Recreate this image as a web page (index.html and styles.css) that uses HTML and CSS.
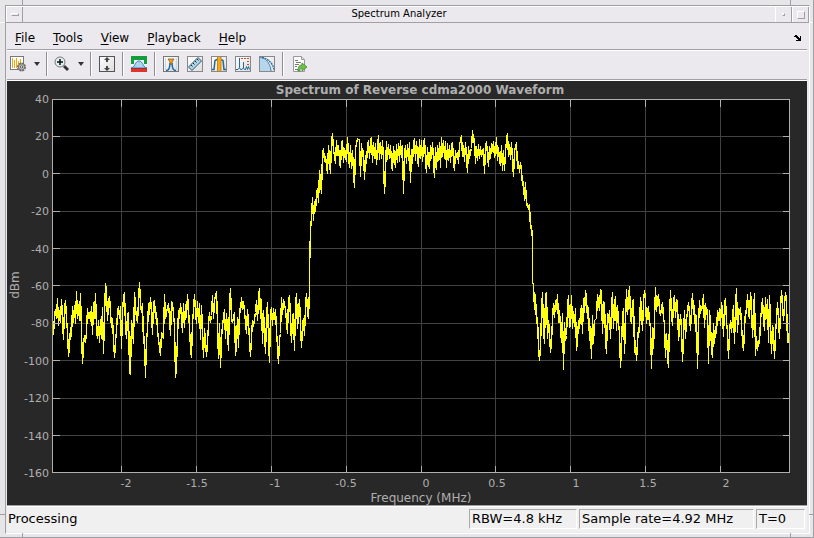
FILE: index.html
```html
<!DOCTYPE html>
<html lang="en">
<head>
<meta charset="UTF-8">
<meta name="viewport" content="width=device-width, initial-scale=1.0">
<title>Spectrum Analyzer</title>
<link rel="stylesheet" href="styles.css">
</head>
<body>
<div class="frame">
<div class="window">
    <header class="titlebar">
        <button class="win-btn win-menu" aria-label="Window menu"><span></span></button>
        <h1>Spectrum Analyzer</h1>
        <button class="win-btn win-min" aria-label="Minimize"><span></span></button>
        <button class="win-btn win-max" aria-label="Maximize"><span></span></button>
    </header>

    <main class="content">
        <nav class="menubar">
            <button><u>F</u>ile</button>
            <button><u>T</u>ools</button>
            <button><u>V</u>iew</button>
            <button><u>P</u>layback</button>
            <button><u>H</u>elp</button>
            <button class="dock" aria-label="Dock">
                <svg width="8" height="6" viewBox="0 0 8 6" shape-rendering="crispEdges"><path d="M1 0h2v1h1v1h1v1h1V1h1v5H2V5h2V4H3V3H2V2H0V1h1z"/></svg>
            </button>
        </nav>

        <div class="toolbar">
            <button aria-label="Configuration">
                <svg viewBox="0 0 16 16">
                    <rect x="-.5" y=".5" width="13" height="13" fill="#fff" stroke="#777"/>
                    <path d="M1.5 2v10M3.5 4v8M5.5 2v10M7.5 5v6M9.5 3v5" stroke="#f5a50a"/>
                    <circle cx="10.500" cy="11" r="3.500" fill="#ddd" stroke="#666" stroke-width="2" stroke-dasharray="2 .7"/>
                    <circle cx="10.500" cy="11" r="3" fill="#ccc" stroke="#777"/>
                    <circle cx="10.500" cy="11" r="1.200" fill="#fff" stroke="#555"/>
                </svg>
            </button>
            <button class="caret" aria-label="Configuration options"></button>
            <span class="sep"></span>
            <button aria-label="Zoom">
                <svg viewBox="0 0 16 16">
                    <path d="M9 10l4 4" stroke="#333" stroke-width="3"/>
                    <circle cx="5" cy="6" r="5" fill="#dff0f4" stroke="#777"/>
                    <path d="M2 6h6M5 3v6" stroke="#111" stroke-width="1.500"/>
                </svg>
            </button>
            <button class="caret" aria-label="Zoom options"></button>
            <span class="sep"></span>
            <button aria-label="Scale axes">
                <svg viewBox="0 0 16 16">
                    <rect x=".5" y=".5" width="15" height="15" fill="url(#paper)" stroke="#555"/>
                    <path d="M8 1l3 3H9v2H7V4H5zM8 15l3-3H9v-2H7v2H5z" fill="#444"/>
                </svg>
            </button>
            <span class="sep"></span>
            <button aria-label="Spectral mask">
                <svg viewBox="0 0 16 16">
                    <rect width="16" height="16" fill="#e8f4fa"/>
                    <path d="M0 0h16v8h-3V4H3v4H0z" fill="#159c3c"/>
                    <path d="M0 12c4 0 4-7 8-7s4 7 8 7z" fill="#b9dcf2" stroke="#3b79aa"/>
                    <path d="M8 5v7M5 8v4M11 8v4" stroke="#7eb1d5" stroke-width=".5"/>
                    <path d="M0 12h16v4H0z" fill="#e53228"/>
                    <path d="M0 12.500h16" stroke="#8d3540"/>
                </svg>
            </button>
            <span class="sep"></span>
            <button aria-label="Peak measurements">
                <svg viewBox="0 0 16 16">
                    <rect x=".5" y=".5" width="15" height="15" fill="url(#paper)" stroke="#777"/>
                    <path d="M8 6v9M2.500 2v12M13.500 2v12" stroke="#bdd9eb"/>
                    <path d="M3 14.500c3 0 3.500-2 4-7h2c.500 5 1 7 4 7" fill="none" stroke="#24699a" stroke-width="1.500"/>
                    <path d="M5 3h6L9 6v2H7V6z" fill="#f5a51a" stroke="#765126" stroke-width=".7"/>
                </svg>
            </button>
            <button aria-label="Cursor measurements">
                <svg viewBox="0 0 16 16">
                    <rect x=".5" y=".5" width="15" height="15" fill="url(#paper)" stroke="#888"/>
                    <path d="M1.500 11L11 1.500 14.500 5 5 14.500z" fill="#acd5ea" stroke="#31566e"/>
                    <path d="M4 9l1.500 1.500M6 7l1.500 1.500M8 5l1.500 1.500M10 3l1.500 1.500" stroke="#222"/>
                </svg>
            </button>
            <button aria-label="Channel measurements">
                <svg viewBox="0 0 16 16">
                    <rect x=".5" y=".5" width="15" height="15" fill="url(#paper)" stroke="#888"/>
                    <path d="M1 13.500h2l1-9 2-1h4l2 1 1 9h2" fill="none" stroke="#24699a" stroke-width="1.500"/>
                    <path d="M6 1h4v14H6z" fill="#fba710"/>
                    <path d="M6.500 1v14M10 1v14" stroke="#cd8416"/>
                </svg>
            </button>
            <button aria-label="Distortion measurements">
                <svg viewBox="0 0 16 16">
                    <rect x=".5" y=".5" width="15" height="15" fill="url(#paper)" stroke="#888"/>
                    <path d="M1 13.500h2l1.500-2V2v9.500l1 2H7l1.500-2V6v6l1 1.500h1l1-3 1 3 1-3 1 3" fill="none" stroke="#24699a"/>
                    <path d="M6 2.500h2M9 2.500h2M12 2.500h2M12 5.500h2M12 8.500h2" stroke="#c64c3d"/>
                </svg>
            </button>
            <button aria-label="CCDF measurements">
                <svg viewBox="0 0 16 16">
                    <rect x=".5" y=".5" width="15" height="15" fill="url(#paper)" stroke="#888"/>
                    <path d="M1 2c5 0 9 5 10 13H1z" fill="#b4d7ee"/>
                    <path d="M1 1.500c5 0 10 5 11 13.500" fill="none" stroke="#3d80ae"/>
                    <path d="M3 1.500c6 1 11 6 12 12" fill="none" stroke="#24699a" stroke-width="1.300" stroke-dasharray="2 .7"/>
                </svg>
            </button>
            <span class="sep"></span>
            <button aria-label="Generate script">
                <svg viewBox="0 0 16 16">
                    <path d="M2.500.500h8l3 3v12h-11z" fill="#fafafa" stroke="#999"/>
                    <path d="M10.500.500v3h3" fill="#ddd" stroke="#999"/>
                    <path d="M4 4.500h3M5 6.500h5M4 8.500h4M4 10.500h2M4 13.500h3" stroke="#777"/>
                    <path d="M7 15c0-4 1-6 4-6V7l5 4-5 4v-3c-2 0-2 1-2 3z" fill="#72bf46" stroke="#3c8b2d" stroke-width=".8"/>
                </svg>
            </button>
        </div>

        <!-- spectrum display -->
        <div class="display">
            <svg class="chart" viewBox="7 81 800 424" role="img" aria-label="Spectrum of Reverse cdma2000 Waveform">
                <defs>
                    <linearGradient id="paper" x2="1" y2="1">
                        <stop offset="0" stop-color="#fff"/>
                        <stop offset="1" stop-color="#dcdcdc"/>
                    </linearGradient>
                </defs>
                <text class="chart-title" x="420" y="94">Spectrum of Reverse cdma2000 Waveform</text>
                <rect x="52" y="99" width="738" height="374"/>
                <g transform="translate(.5 .5)" shape-rendering="crispEdges">
                    <path class="grid" d="M121 99v373M196 99v373M271 99v373M346 99v373M421 99v373M495 99v373M570 99v373M645 99v373M720 99v373M52 136h737M52 173h737M52 211h737M52 248h737M52 285h737M52 323h737M52 360h737M52 398h737M52 435h737"/>
                    <polyline class="trace" points="
                        53,335 54,315 55,309 56,318 57,298 58,325 59,310 60,322 61,299 62,318 63,339 64,308 65,300 66,319 67,331 68,356 69,345 70,327 71,336 72,306 73,322 74,305 75,323 76,291 77,318 78,304 79,320 80,293 81,332 82,363 83,345 84,335 85,342 86,331 87,308 88,318 89,312 90,321 91,306 92,334 93,302 94,318 95,293 96,328 97,338 98,320 99,342 100,319 101,338 102,307 103,353 104,315 105,283 106,292 107,320 108,303 109,296 110,312 111,327 112,318 113,339 114,357 115,341 116,330 117,313 118,306 119,318 120,306 121,348
                        122,310 123,298 124,292 125,325 126,338 127,314 128,312 129,372 130,374 131,320 132,329 133,343 134,292 135,307 136,318 137,322 138,300 139,282 140,303 141,312 142,303 143,343 144,336 145,377 146,339 147,330 148,303 149,314 150,297 151,312 152,334 153,303 154,300 155,318 156,312 157,330 158,339 160,355 161,332 163,338 164,294 165,318 167,307 168,303 169,316 170,335 171,301 172,303 174,325 175,377 176,366 177,337 178,310 179,318 180,303 181,315 182,332 183,303 184,327 185,304 186,317 187,294 188,309 190,347
                        191,357 192,322 193,310 194,294 195,312 196,323 197,301 198,322 199,303 200,339 201,305 203,357 204,328 206,356 207,340 208,325 209,312 210,322 211,315 212,295 213,318 214,300 216,291 217,323 218,358 219,323 220,367 221,338 222,325 224,309 225,338 226,313 228,350 229,303 230,288 231,319 232,322 234,312 235,355 236,345 237,317 238,347 239,308 240,312 241,297 242,309 243,301 244,311 246,333 247,309 248,322 250,356 251,337 252,320 253,326 255,312 256,300 257,320 258,298 259,288 260,318 261,299 262,343 263,310 265,353 266,317 267,302 268,338 269,362 270,314 271,307 272,325 273,308 274,319 275,309 276,330 278,363 279,338 280,333 281,297 282,314 283,299 285,309 287,333 288,299 289,295 291,342 292,315 293,313 294,350 295,306 296,293 297,328 298,313 299,299 301,347 302,325 303,318 304,335 305,307 306,293 307,312 308,318 309,288 309,270
                        310,229 311,217 312,197 313,220 314,201 315,211 316,194 317,188 318,202 319,170 320,181 321,193 322,152 323,148 324,161 325,156 327,173 328,145 329,160 330,173 331,142 332,133 333,150 334,155 335,163 336,140 337,155 338,145 339,160 340,167 341,143 342,140 343,162 344,148 345,154 346,161 347,137 348,155 349,167 350,145 351,168 352,150 353,172 354,187 355,148 357,138 358,139 359,139 360,176 361,143 362,156 363,150 364,179 365,155 366,163 367,145 368,140 369,158 370,140 371,137 372,162 373,142 374,158 375,143 376,164 377,148 378,135 379,159 380,142 381,158 382,140 383,160 384,193 385,172 386,141 387,159 388,144 389,158 390,145 391,163 392,170 393,146 394,158 395,167 396,144 397,162 398,143 399,161 400,140 401,157 402,145 403,193 404,153 405,145 406,163 407,144 408,160 409,142 410,182 411,149 412,163 413,143 414,138 415,160 416,141 417,157 418,166 419,139 420,158 421,140 422,161 423,145 424,138 425,159 426,172 427,147 428,161 429,168 430,145 431,158 432,142 433,160 434,177 435,147 436,169 437,145 438,160 439,142 440,167 441,137 442,156 443,140 444,158 445,141 446,167 447,143 448,160 449,145 450,162 451,145 452,142 453,161 454,170 455,150 456,157 457,152 458,163 459,144 460,140 461,135 462,156 463,145 464,161 465,142 466,158 467,172 468,146 469,158 470,151 471,148 472,130 473,142 474,138 475,163 476,146 477,160 478,144 479,158 480,146 481,156 482,151 483,148 484,173 485,146 486,141 487,154 488,166 489,146 490,158 491,143 492,151 493,141 494,157 495,153 496,137 497,160 498,147 499,160 500,165 501,145 502,170 503,150 504,170 505,151 506,140 507,133 508,156 509,144 510,159 511,142 512,160 513,176 514,151 516,142 517,168 518,161 519,172 520,162 521,170 522,185 523,181 524,200 525,182 526,205 527,203 528,209 529,204 530,228 531,225 532,240 532,283
                        533,283 534,309 535,294 536,323 537,317 538,348 539,360 540,345 541,313 542,292 543,328 544,343 545,294 546,292 547,338 548,320 549,332 550,352 551,341 552,320 553,303 554,317 555,300 556,309 557,294 558,322 559,310 560,327 561,342 562,313 563,369 564,322 565,340 566,335 567,309 568,295 569,327 570,326 571,295 572,328 573,311 574,326 575,308 576,350 577,340 578,320 579,328 580,314 581,305 582,333 583,298 584,312 585,290 586,299 587,318 588,307 589,340 590,326 591,358 592,315 593,343 594,320 596,318 597,294 598,301 599,310 600,289 601,290 602,333 603,301 604,302 605,338 606,353 607,313 608,322 609,310 610,338 611,308 612,292 613,328 614,305 615,296 616,330 617,305 618,322 619,332 620,367 621,345 622,318 623,308 624,353 625,321 626,289 627,314 628,298 629,286 630,318 631,323 632,302 633,299 634,352 635,340 636,360 637,342 638,327 639,332 640,297 641,309 642,330 643,301 644,290 645,299 646,323 647,311 648,306 649,325 650,323 651,368 652,327 653,348 654,320 655,287 656,311 657,298 658,294 659,310
                        660,315 661,308 662,302 663,318 664,323 665,357 666,333 667,355 668,367 669,320 670,290 671,314 672,325 673,302 674,295 675,317 676,299 677,302 678,340 679,329 680,314 681,328 682,361 683,338 684,310 685,338 686,318 687,312 688,302 689,314 690,330 691,309 692,293 693,314 694,305 695,331 696,315 697,368 698,325 699,300 700,313 701,306 702,308 703,294 704,327 705,303 706,314 707,309 708,363 709,310 710,324 711,347 712,357 713,323 714,343 715,326 716,333 717,310 718,320 719,308 720,325 721,302 722,309 723,336 724,305 725,298 726,321 727,332 728,358 729,331 730,320 731,332 732,317 733,305 734,343 735,308 736,288 737,332 738,308 739,314 740,307 741,325 742,340 743,350 744,328 745,310 746,313 747,294 748,313 749,318 750,292 751,304 752,337 753,314 754,293 755,355 756,336 757,350 758,340 759,343 760,320 761,309 762,298 763,319 764,330 765,297 766,318 767,299 768,342 769,295 770,321 771,353 772,325 773,331 774,358 775,333 776,320 777,302 778,320 779,338 780,309 781,290 782,306 783,320 784,304 785,292 786,301 787,342 788,333 789,346"/>
                    <path class="axes" d="M52 99h737v373H52zM121 99v7M196 99v7M271 99v7M346 99v7M421 99v7M495 99v7M570 99v7M645 99v7M720 99v7M121 472v-7M196 472v-7M271 472v-7M346 472v-7M421 472v-7M495 472v-7M570 472v-7M645 472v-7M720 472v-7M52 136h7M52 173h7M52 211h7M52 248h7M52 285h7M52 323h7M52 360h7M52 398h7M52 435h7M789 136h-7M789 173h-7M789 211h-7M789 248h-7M789 285h-7M789 323h-7M789 360h-7M789 398h-7M789 435h-7"/>
                </g>
                <g class="y-labels">
                    <text x="49" y="103">40</text>
                    <text x="49" y="140">20</text>
                    <text x="49" y="178">0</text>
                    <text x="49" y="215">-20</text>
                    <text x="49" y="253">-40</text>
                    <text x="49" y="290">-60</text>
                    <text x="49" y="327">-80</text>
                    <text x="49" y="365">-100</text>
                    <text x="49" y="402">-120</text>
                    <text x="49" y="440">-140</text>
                    <text x="49" y="477">-160</text>
                </g>
                <g class="x-labels">
                    <text x="126" y="487">-2</text>
                    <text x="197" y="487">-1.5</text>
                    <text x="275" y="487">-1</text>
                    <text x="346" y="487">-0.5</text>
                    <text x="426" y="487">0</text>
                    <text x="497" y="487">0.5</text>
                    <text x="576" y="487">1</text>
                    <text x="648" y="487">1.5</text>
                    <text x="726" y="487">2</text>
                </g>
                <text class="axis-name" x="421" y="502">Frequency (MHz)</text>
                <text class="axis-name" transform="translate(19 285) rotate(-90)">dBm</text>
            </svg>
        </div>

        <footer class="statusbar">
            <span class="state">Processing</span>
            <span class="field rbw">RBW=4.8 kHz</span>
            <span class="field rate">Sample rate=4.92 MHz</span>
            <span class="field time">T=0</span>
        </footer>
    </main>
</div>
</div>
</body>
</html>
```
FILE: styles.css
```css
* {
    box-sizing: border-box;
}

body {
    margin: 0;
    background-color: #ebe9ed;
    font-family: "DejaVu Sans", sans-serif;
    color: #000;
}

button {
    margin: 0;
    padding: 0;
    border: none;
    background: none;
    font: inherit;
    color: inherit;
}

.frame {
    position: relative;
    min-height: 100vh;
    padding: 5px 3px 3px 5px;
    border-right: 1px solid #a19fa3;
    border-bottom: 1px solid #a19fa3;
    background-color: #e6e5e7;
}

/* resize notches in the window frame */
.frame::before,
.frame::after {
    content: "";
    position: absolute;
    pointer-events: none;
}

.frame::before {
    top: 22px;
    bottom: 22px;
    left: 0;
    right: 0;
    border-top: 1px solid #fff;
    border-bottom: 1px solid #a19fa3;
    clip-path: polygon(0 0, 5px 0, 5px 100%, calc(100% - 4px) 100%, calc(100% - 4px) 0, 100% 0, 100% 100%, 0 100%);
}

.frame::after {
    left: 22px;
    right: 22px;
    top: 0;
    bottom: 0;
    border-left: 1px solid #a19fa3;
    border-right: 1px solid #a19fa3;
    clip-path: polygon(0 0, 100% 0, 100% 5px, 0 5px, 0 calc(100% - 4px), 100% calc(100% - 4px), 100% 100%, 0 100%);
}

.window {
    display: flex;
    flex-direction: column;
    min-height: calc(100vh - 9px);
    border-top: 1px solid #a19fa3;
    border-left: 1px solid #a19fa3;
    border-right: 1px solid #fff;
    border-bottom: 1px solid #fff;
    background-color: #ebe9ed;
}

.titlebar {
    display: flex;
    height: 17px;
    border-top: 1px solid #fff;
    border-bottom: 1px solid #a19fa3;
}

.titlebar h1 {
    flex: 1;
    margin: 0;
    font-size: 10px;
    line-height: 14px;
    font-weight: normal;
    text-align: center;
}

.win-btn {
    display: flex;
    align-items: center;
    justify-content: center;
    width: 17px;
    border-left: 1px solid #fff;
    border-right: 1px solid #a19fa3;
}

.win-btn span {
    border: 1px solid #fff;
    border-right-color: #a19fa3;
    border-bottom-color: #a19fa3;
}

.win-menu span {
    width: 8px;
    height: 3px;
}

.win-min span {
    width: 3px;
    height: 3px;
}

.win-max span {
    width: 8px;
    height: 8px;
}

.content {
    flex: 1;
    display: flex;
    flex-direction: column;
    margin: 0 2px 1px 1px;
}

.menubar {
    display: flex;
    align-items: center;
    gap: 18px;
    height: 28px;
    padding: 2px 5px 0 8px;
    border-bottom: 1px solid #fff;
    box-shadow: inset 0 -1px #a19fa3;
    font-size: 12px;
}

.menubar u {
    text-underline-offset: 2px;
}

.dock {
    display: flex;
    margin-left: auto;
}

.toolbar {
    display: flex;
    align-items: center;
    height: 30px;
    padding: 0 4px 3px;
    border-bottom: 1px solid #fff;
    box-shadow: inset 0 -1px #a19fa3;
}

.toolbar button {
    width: 16px;
    height: 16px;
}

.toolbar button + button {
    margin-left: 8px;
}

.toolbar svg {
    display: block;
    width: 16px;
    height: 16px;
    overflow: visible;
}

.toolbar button.caret {
    width: 6px;
    height: 4px;
    margin-left: 7px;
    background-color: #333;
    clip-path: polygon(0 0, 100% 0, 50% 100%);
}

.sep {
    width: 2px;
    height: 24px;
    margin: 0 7px;
    border-left: 1px solid #8f8d91;
    border-right: 1px solid #fff;
}

.caret + .sep {
    margin-left: 6px;
}

.display {
    flex: 1;
    background-color: #282828;
}

.chart {
    display: block;
    width: 100%;
    height: auto;
}

.chart text {
    fill: #afafaf;
    font-size: 11px;
    text-anchor: middle;
}

.chart .chart-title {
    font-size: 12px;
    font-weight: bold;
}

.chart .axis-name {
    font-size: 12px;
}

.chart .y-labels text {
    text-anchor: end;
}

.grid {
    stroke: #424242;
}

.trace,
.axes {
    fill: none;
}

.trace {
    stroke: #ffff11;
    stroke-width: 1.4;
    stroke-linejoin: bevel;
}

.axes {
    stroke: #afafaf;
}

.statusbar {
    display: flex;
    align-items: center;
    gap: 2px;
    height: 27px;
    padding: 0 2px 0 1px;
    border-top: 1px solid #a19fa3;
    box-shadow: inset 0 1px #fff;
    background-color: #f0f0f0;
    font-size: 13px;
    line-height: 18px;
}

.state {
    flex: 1;
}

.field {
    padding-left: 2px;
    border: 1px solid #a9a9a9;
    border-right-color: #fff;
    border-bottom-color: #fff;
    white-space: nowrap;
}

.rbw {
    width: 108px;
}

.rate {
    width: 175px;
}

.time {
    width: 49px;
}
```
